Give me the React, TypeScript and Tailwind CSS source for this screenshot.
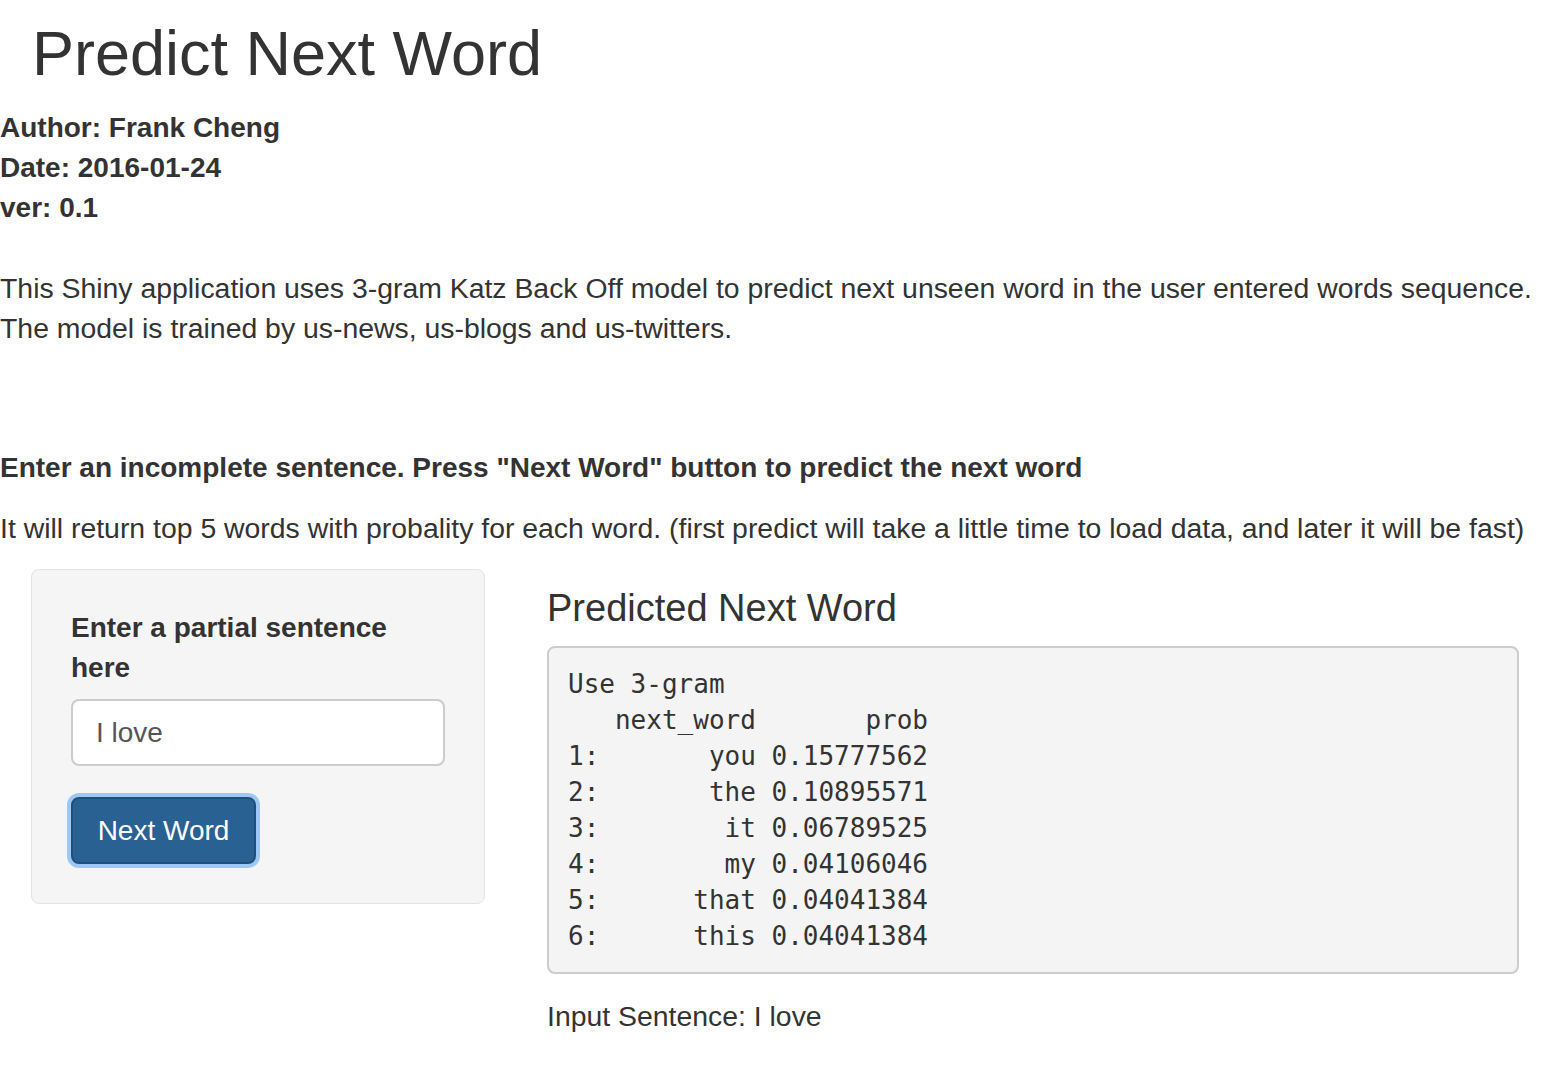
export default function App() {
  const rows = [
    ["1:", "you", "0.15777562"],
    ["2:", "the", "0.10895571"],
    ["3:", "it", "0.06789525"],
    ["4:", "my", "0.04106046"],
    ["5:", "that", "0.04041384"],
    ["6:", "this", "0.04041384"],
  ];

  const output =
    "Use 3-gram\n   next_word       prob\n" +
    rows.map(([n, w, p]) => n + w.padStart(10) + " " + p).join("\n");

  return (
    <div className="min-h-screen bg-white text-[#333] font-['Liberation_Sans',Arial,sans-serif] text-[28.4px] leading-[40px]">
      <h2 className="pl-[32px] pt-[20px] text-[63px] leading-[66px] font-medium">
        Predict Next Word
      </h2>

      <div className="mt-[22px] font-bold text-[28px]">
        <div>Author: Frank Cheng</div>
        <div>Date: 2016-01-24</div>
        <div>ver: 0.1</div>
      </div>

      <p className="mt-[40px]">
        This Shiny application uses 3-gram Katz Back Off model to predict next
        unseen word in the user entered words sequence.
        <br />
        The model is trained by us-news, us-blogs and us-twitters.
      </p>

      <p className="mt-[100px] font-bold text-[28px]">
        Enter an incomplete sentence. Press "Next Word" button to predict the
        next word
      </p>
      <p className="mt-[20px]">
        It will return top 5 words with probality for each word. (first
        predict will take a little time to load data, and later it will be
        fast)
      </p>

      <div className="mt-[21px] flex items-start">
        {/* sidebar */}
        <div className="ml-[31px] w-[454px] shrink-0 rounded-[8px] border border-[#e3e3e3] bg-[#f5f5f5] px-[39px] pt-[38px] pb-[39px]">
          <label className="block font-bold text-[28px]" htmlFor="sentence">
            Enter a partial sentence here
          </label>
          <input
            id="sentence"
            defaultValue="I love"
            className="mt-[11px] block h-[67px] w-full rounded-[8px] border-2 border-[#ccc] bg-white px-[23px] text-[28px] text-[#555] outline-none"
          />
          <button className="mt-[31px] h-[67px] w-[185px] rounded-[8px] border-2 border-[#1f4f7c] bg-[#2a6193] text-[28px] text-white shadow-[0_0_0_4px_rgba(110,175,240,0.65)]">
            Next Word
          </button>
        </div>

        {/* main panel */}
        <div className="ml-[62px] w-[972px]">
          <h3 className="mt-[19px] text-[38px] leading-[40px] font-medium">
            Predicted Next Word
          </h3>
          <pre className="mt-[18px] rounded-[8px] border-2 border-[#ccc] bg-[#f4f4f4] px-[19px] py-[18px] font-['DejaVu_Sans_Mono','Liberation_Mono',monospace] text-[26px] leading-[36px] text-[#333]">
            {output}
          </pre>
          <div className="mt-[22px]">Input Sentence: I love</div>
        </div>
      </div>
    </div>
  );
}
